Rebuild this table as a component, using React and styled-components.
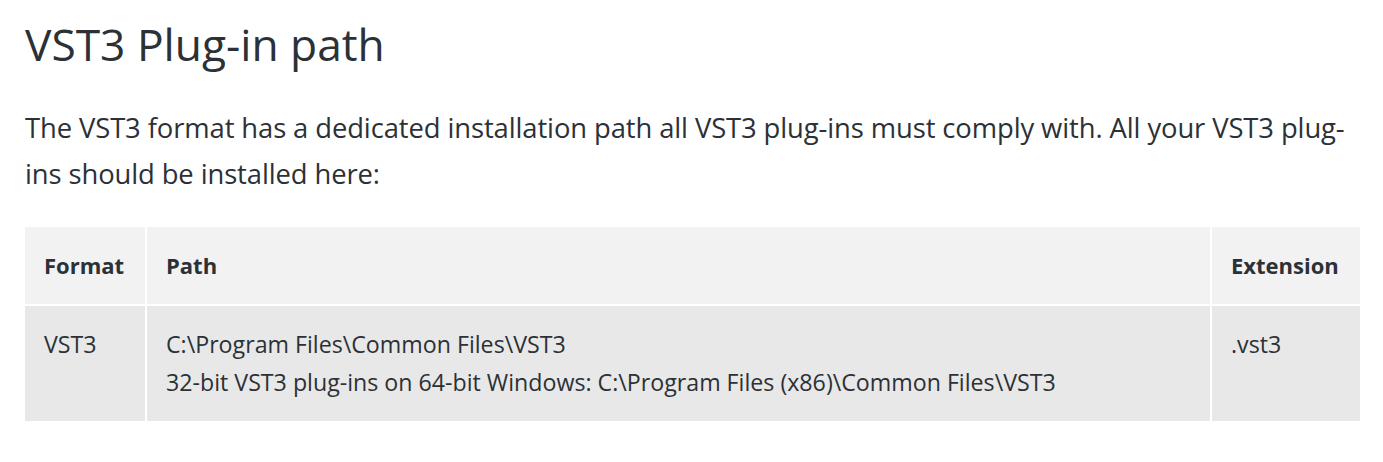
import styled, { createGlobalStyle } from "styled-components";

const GlobalStyle = createGlobalStyle`
  body {
    margin: 0;
    background: #ffffff;
    font-family: "Open Sans", "Noto Sans", sans-serif;
    color: #2b3136;
  }
`;

const App = () => {
  return (
    <>
      <GlobalStyle />
      <St.Page>
        <St.Title>VST3 Plug-in path</St.Title>
        <St.Intro>
          The VST3 format has a dedicated installation path all VST3 plug-ins must comply with. All your VST3 plug-ins
          should be installed here:
        </St.Intro>

        <St.Table>
          <colgroup>
            <col style={{ width: "121px" }} />
            <col />
            <col style={{ width: "149px" }} />
          </colgroup>
          <thead>
            <tr>
              <St.HeadCell>Format</St.HeadCell>
              <St.HeadCell>Path</St.HeadCell>
              <St.HeadCell>Extension</St.HeadCell>
            </tr>
          </thead>
          <tbody>
            <tr>
              <St.Cell>VST3</St.Cell>
              <St.Cell>
                C:\Program Files\Common Files\VST3
                <br />
                32-bit VST3 plug-ins on 64-bit Windows: C:\Program Files (x86)\Common Files\VST3
              </St.Cell>
              <St.Cell>.vst3</St.Cell>
            </tr>
          </tbody>
        </St.Table>
      </St.Page>
    </>
  );
};

export default App;

const St = {
  Page: styled.main`
    width: 1335px;
    padding: 12px 0 0 25px;
  `,

  Title: styled.h1`
    margin: 0;

    font-size: 44.3px;
    font-weight: 400;
    line-height: 64px;
  `,

  Intro: styled.p`
    margin: 29px 0 0;

    font-size: 27.4px;
    line-height: 46px;
    letter-spacing: -0.1px;
  `,

  Table: styled.table`
    width: 100%;
    margin-top: 30px;

    table-layout: fixed;
    border-collapse: collapse;
  `,

  HeadCell: styled.th`
    padding: 20px 19px;

    text-align: left;
    font-size: 22px;
    font-weight: 700;
    line-height: 37px;

    background-color: #f2f2f2;
    border: 2px solid #ffffff;
    border-top: none;
    &:first-child {
      border-left: none;
    }
    &:last-child {
      border-right: none;
    }
  `,

  Cell: styled.td`
    padding: 20px 19px;
    vertical-align: top;

    font-size: 23.2px;
    line-height: 37.5px;

    background-color: #e8e8e8;
    border: 2px solid #ffffff;
    border-bottom: none;
    &:first-child {
      border-left: none;
    }
    &:last-child {
      border-right: none;
    }
  `,
};
